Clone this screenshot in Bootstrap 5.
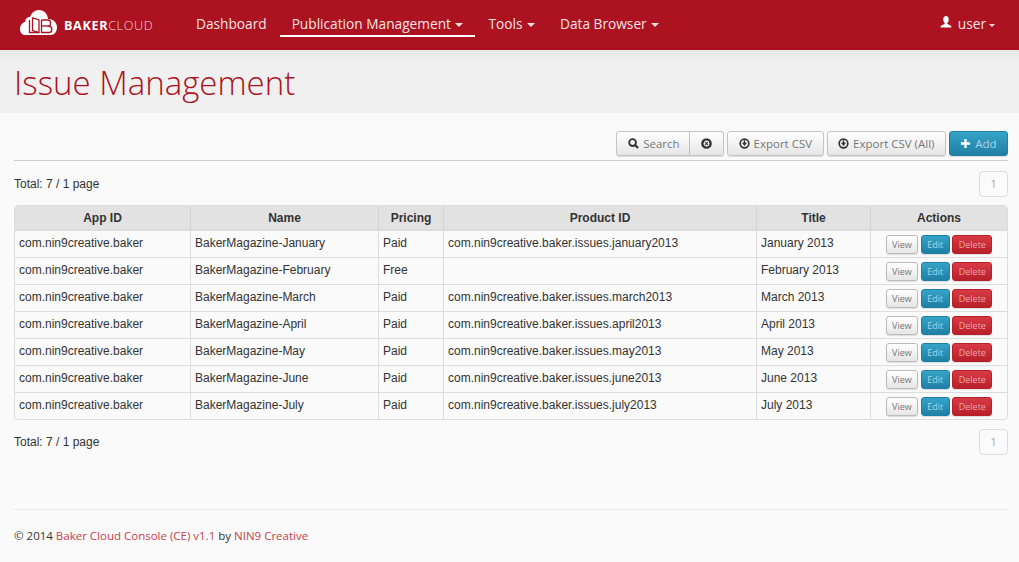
<!DOCTYPE html>
<html lang="en">
<head>
  <meta charset="UTF-8">
  <meta name="viewport" content="width=device-width, initial-scale=1">
  <title>Issue Management</title>
  <link href="https://cdn.jsdelivr.net/npm/bootstrap@5.3.0/dist/css/bootstrap.min.css" rel="stylesheet">
  <style>
    body { background: #fafafa; font-family: "Liberation Sans", Arial, sans-serif; font-size: 12px; color: #333; }
    .top-bar { background: #ac1220; height: 50px; padding: 0 14px 0 20px; font-family: "Open Sans", sans-serif; }
    .brand-box { display: flex; align-items: center; width: 164px; height: 50px; text-decoration: none; }
    .brand-box svg { margin-bottom: 5px; }
    .brand-text { font-family: "Open Sans", sans-serif; font-size: 12.6px; letter-spacing: .65px; color: #fff; margin-left: 7px; margin-top: 2px; font-weight: 700; }
    .brand-text span { font-weight: 300; color: #f0d5d8; }
    .top-link { color: #f6e4e5; font-size: 13.7px; padding: 14px 12px 0; height: 37px; line-height: 20px; margin-right: 1px; text-decoration: none; display: block; }
    .top-link.on { border-bottom: 2px solid #fff; color: #f6e4e5; }
    .caret-mark { display: inline-block; border-top: 4px solid #f3dcde; border-left: 4px solid transparent; border-right: 4px solid transparent; margin-left: 1px; vertical-align: 2px; }
    .caret-small { border-top-width: 3px; border-left-width: 3px; border-right-width: 3px; margin-left: 3px; }
    .user-link { padding-right: 10px; margin-right: 0; }
    .user-icon { margin-right: 6px; vertical-align: 1px; }
    .head-band { background: linear-gradient(#e8e8e8, #f0f0f0 12px); height: 63px; padding: 12px 14px 0; }
    .head-band h1 { font-family: "Open Sans", sans-serif; font-weight: 300; font-size: 33px; line-height: 42px; color: #ac1220; margin: 0; }
    .page-body { padding: 18px 11px 0 14px; }
    .tool-row { border-bottom: 1px solid #ccc; height: 30px; gap: 3px; }
    .tool-btn { font-family: "Open Sans", sans-serif; font-size: 11.5px; color: #777; height: 25px; padding: 0 10.5px; line-height: 23px; background: linear-gradient(#fff, #e6e6e6); border: 1px solid #c4c4c4; border-radius: 3px; box-shadow: 0 1px 1px rgba(0,0,0,.12); white-space: nowrap; }
    .tool-btn svg { vertical-align: -1px; margin-right: 1px; }
    .tool-search { padding: 0 9.5px 0 11px; }
    .tool-clear { padding: 0 11px; }
    .tool-clear svg { display: block; margin: 0; }
    .tool-add { background: linear-gradient(#37a3c8, #1f7fa4); border-color: #1f7fa4; color: #a9d5e6; width: 59px; padding: 0; }
    .page-one { font-family: "Open Sans", sans-serif; width: 29px; height: 26px; line-height: 24px; text-align: center; color: #aaa; font-size: 11.5px; border: 1px solid #ddd; border-radius: 4px; background: #fbfbfb; }
    .total-row { height: 44px; padding-top: 2px; }
    .issue-table { table-layout: fixed; width: 994px; border-collapse: separate; border-spacing: 0; border: 1px solid #ddd; border-radius: 4px; margin: 0; background: transparent; }
    .issue-table th { background: #e2e2e2; height: 24px; padding: 0; font-size: 12px; text-align: center; color: #333; border-left: 1px solid #d4d4d4; vertical-align: middle; }
    .issue-table td { background: transparent; height: 27px; padding: 0 4px 3px; font-size: 12px; color: #333; border-top: 1px solid #ddd; border-left: 1px solid #ddd; border-bottom: 0; vertical-align: middle; }
    .issue-table th:first-child, .issue-table td:first-child { border-left: 0; }
    .issue-table th:first-child { border-top-left-radius: 3px; }
    .issue-table th:last-child { border-top-right-radius: 3px; }
    .w-app { width: 175px; } .w-name { width: 188px; } .w-price { width: 65px; }
    .w-prod { width: 313px; } .w-title { width: 114px; }
    .act-wrap { display: flex; justify-content: center; gap: 2.5px; margin: 2px 0 -1px; }
    .act-btn { font-family: "Open Sans", sans-serif; font-size: 9px; height: 19px; line-height: 17px; padding: 0 5.5px; border-radius: 3px; border: 1px solid #bbb; background: linear-gradient(#fff, #e6e6e6); color: #777; box-shadow: 0 1px 1px rgba(0,0,0,.12); }
    .act-edit { background: linear-gradient(#37a3c8, #1f7fa4); border-color: #1f7fa4; color: #a9d5e6; }
    .act-del { background: linear-gradient(#d83a45, #b82029); border-color: #b82029; color: #eba6ab; }
    .foot-box { margin: 45px 11px 0 14px; border-top: 1px solid #e8e8e8; padding-top: 17px; font-family: "Open Sans", sans-serif; font-size: 11.5px; color: #333; }
    .foot-box a { color: #c8404c; text-decoration: none; }
  </style>
</head>
<body>

<!-- Navbar -->
<nav class="top-bar d-flex align-items-start">
  <a class="brand-box" href="#">
    <svg width="37" height="25" viewBox="0 0 37 25">
      <path fill="#fff" d="M5 25C2 25 0 22.500 0 19C0 15 2.500 12.500 5 12C5.500 8 8 6.500 10 7C11.500 3 14.500 0 19 0C24 0 27.500 3.500 28 9C33 9 37 12 37 17.500C37 22 34 25 31 25Z"/>
      <g fill="none" stroke="#ac1220" stroke-width="1.300">
        <path d="M9.500 10V22.500H19"/>
        <path d="M12.500 10V20.500L19 22.500V10L12.500 8V10"/>
        <path d="M21.500 10V22.500H29C32.500 22.500 33 17 29 16C31.500 15 31 10 28 10H21.500"/>
        <path d="M21.500 16H29"/>
      </g>
    </svg>
    <span class="brand-text">BAKER<span>CLOUD</span></span>
  </a>
  <a class="top-link" href="#">Dashboard</a>
  <a class="top-link on" href="#">Publication Management <i class="caret-mark"></i></a>
  <a class="top-link" href="#">Tools <i class="caret-mark"></i></a>
  <a class="top-link" href="#">Data Browser <i class="caret-mark"></i></a>
  <a class="top-link user-link ms-auto" href="#">
    <svg class="user-icon" width="12" height="12" viewBox="0 0 12 12"><path fill="#fff" d="M6 0C4.300 0 3.200 1.300 3.200 3.200C3.200 5 4 6.300 4.800 7C4.800 7.800 4.500 8 3.500 8.500C2 9 .5 9.500.5 11.500H11.500C11.500 9.500 10 9 8.500 8.500C7.500 8 7.200 7.800 7.200 7C8 6.300 8.800 5 8.800 3.200C8.800 1.300 7.700 0 6 0Z"/></svg>user<i class="caret-mark caret-small"></i>
  </a>
</nav>

<!-- Title -->
<section class="head-band">
  <h1>Issue Management</h1>
</section>

<div class="page-body">
  <div class="tool-row d-flex justify-content-end">
    <div class="d-flex">
      <button class="tool-btn tool-search rounded-end-0">
        <svg width="11" height="11" viewBox="0 0 12 12"><circle cx="5" cy="5" r="3.700" fill="none" stroke="#333" stroke-width="2"/><path d="M7.700 7.700L11 11" stroke="#333" stroke-width="2.400"/></svg>
        Search</button>
      <button class="tool-btn tool-clear rounded-start-0 border-start-0" aria-label="Clear">
        <svg width="11" height="11" viewBox="0 0 12 12"><circle cx="6" cy="6" r="4.500" fill="none" stroke="#333" stroke-width="2.600"/><path d="M4.500 4.500L7.500 7.500M7.500 4.500L4.500 7.500" stroke="#333" stroke-width="1.200"/></svg>
      </button>
    </div>
    <button class="tool-btn">
      <svg width="11" height="11" viewBox="0 0 12 12"><circle cx="6" cy="6" r="4.700" fill="none" stroke="#333" stroke-width="1.800"/><path d="M6 2.500V6.500M4 5L6 7.500L8 5" stroke="#333" stroke-width="1.500" fill="none"/></svg>
      Export CSV</button>
    <button class="tool-btn">
      <svg width="11" height="11" viewBox="0 0 12 12"><circle cx="6" cy="6" r="4.700" fill="none" stroke="#333" stroke-width="1.800"/><path d="M6 2.500V6.500M4 5L6 7.500L8 5" stroke="#333" stroke-width="1.500" fill="none"/></svg>
      Export CSV (All)</button>
    <button class="tool-btn tool-add">
      <svg width="11" height="11" viewBox="0 0 12 12"><path d="M6 1V11M1 6H11" stroke="#fff" stroke-width="2.600"/></svg>
      Add</button>
  </div>

  <div class="total-row d-flex justify-content-between align-items-center">
    <span>Total: 7 / 1 page</span>
    <div class="page-one">1</div>
  </div>

  <table class="table issue-table">
    <colgroup>
      <col class="w-app"><col class="w-name"><col class="w-price"><col class="w-prod"><col class="w-title"><col>
    </colgroup>
    <thead>
      <tr><th>App ID</th><th>Name</th><th>Pricing</th><th>Product ID</th><th>Title</th><th>Actions</th></tr>
    </thead>
    <tbody id="issueRows"></tbody>
  </table>

  <div class="total-row pt-0 d-flex justify-content-between align-items-center">
    <span>Total: 7 / 1 page</span>
    <div class="page-one">1</div>
  </div>
</div>

<footer class="foot-box">
  © 2014 <a href="#">Baker Cloud Console (CE) v1.1</a> by <a href="#">NIN9 Creative</a>
</footer>

<script>
  var issues = [
    ['January', 'Paid', 'january2013', 'January 2013'],
    ['February', 'Free', '', 'February 2013'],
    ['March', 'Paid', 'march2013', 'March 2013'],
    ['April', 'Paid', 'april2013', 'April 2013'],
    ['May', 'Paid', 'may2013', 'May 2013'],
    ['June', 'Paid', 'june2013', 'June 2013'],
    ['July', 'Paid', 'july2013', 'July 2013']
  ];
  document.getElementById('issueRows').innerHTML = issues.map(function (r) {
    return '<tr><td>com.nin9creative.baker</td><td>BakerMagazine-' + r[0] + '</td><td>' + r[1] + '</td><td>' +
      (r[2] ? 'com.nin9creative.baker.issues.' + r[2] : '') + '</td><td>' + r[3] + '</td>' +
      '<td><div class="act-wrap"><button class="act-btn">View</button><button class="act-btn act-edit">Edit</button><button class="act-btn act-del">Delete</button></div></td></tr>';
  }).join('');
</script>
<script src="https://cdn.jsdelivr.net/npm/bootstrap@5.3.0/dist/js/bootstrap.bundle.min.js"></script>

</body>
</html>
